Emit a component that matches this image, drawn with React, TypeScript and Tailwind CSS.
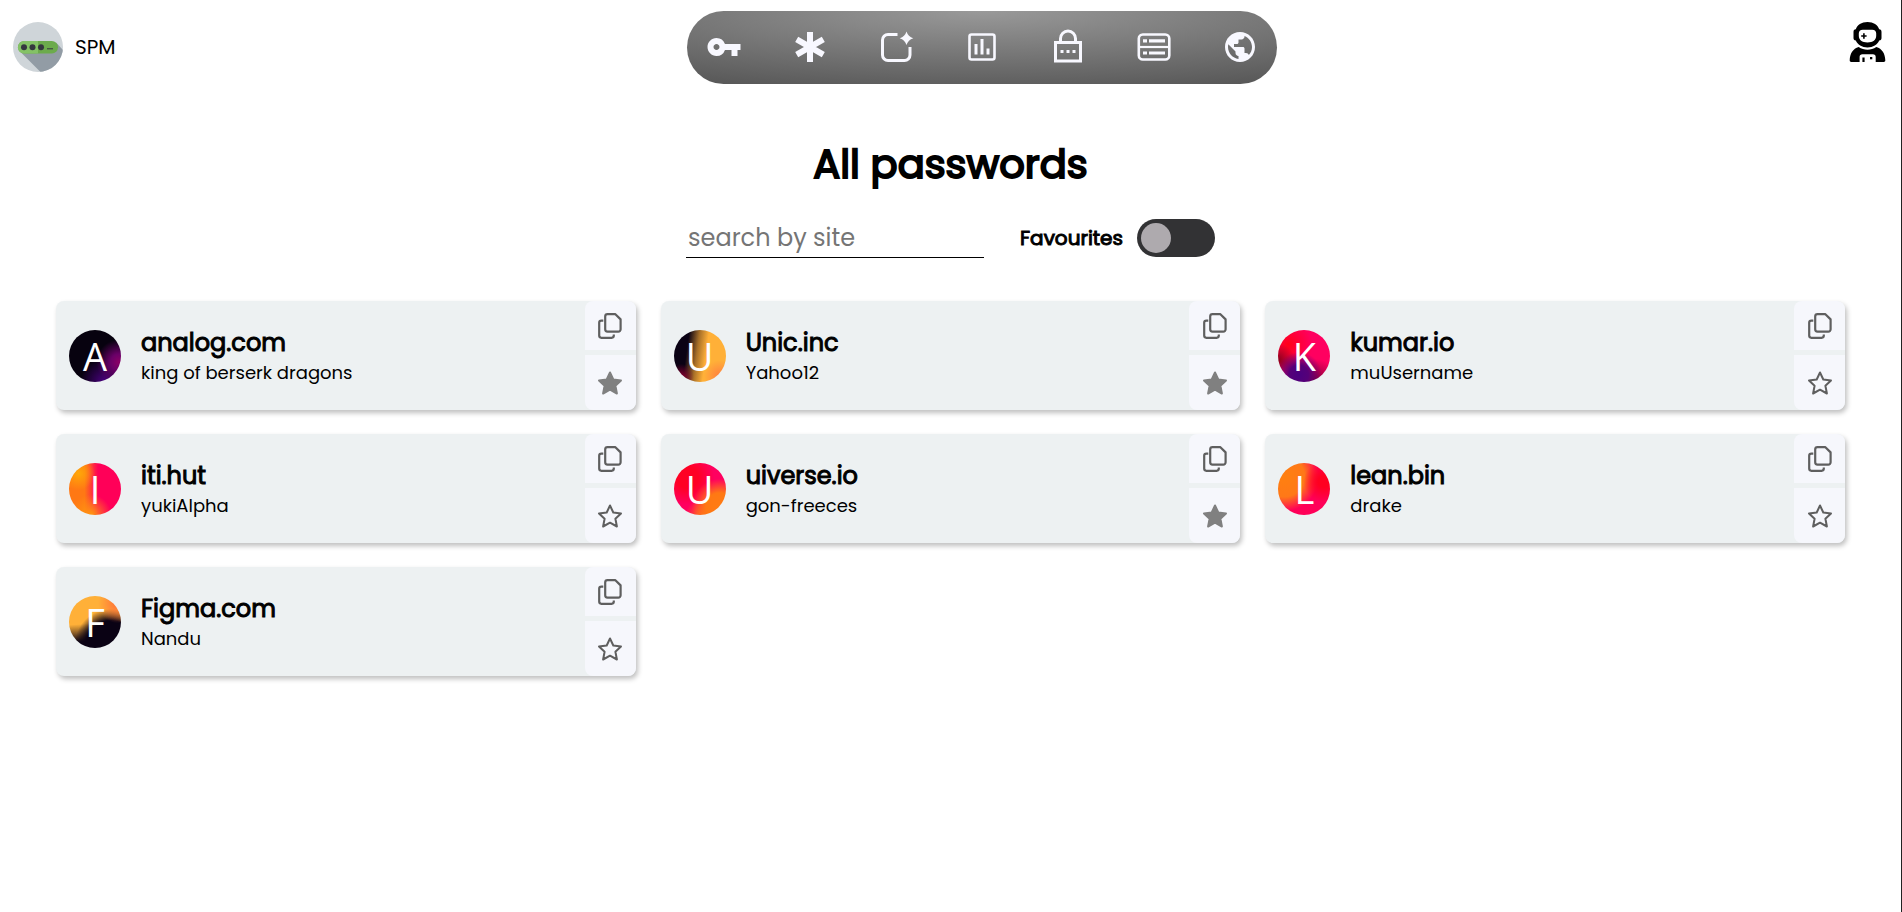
import { useState } from "react";
import type { ReactNode } from "react";
import { MdPublic, MdVpnKey } from "react-icons/md";

type Entry = { site: string; user: string; favourite: boolean; gradient: string };

const initialEntries: Entry[] = [
  { site: "analog.com", user: "king of berserk dragons", favourite: true, gradient: "bg-[radial-gradient(circle_at_96%_62%,#8b0066_0%,#6a0068_14%,transparent_38%),radial-gradient(circle_at_68%_100%,#4a0080_0%,transparent_38%),linear-gradient(#07020f,#07020f)]" },
  { site: "Unic.inc", user: "Yahoo12", favourite: true, gradient: "bg-[radial-gradient(circle_at_14%_90%,#8b0030_0%,transparent_20%),radial-gradient(circle_at_88%_88%,#ff8040_0%,transparent_24%),linear-gradient(98deg,#0a0214_26%,#a87028_44%,#ffb038_60%)]" },
  { site: "kumar.io", user: "muUsername", favourite: false, gradient: "bg-[radial-gradient(circle_at_40%_86%,#4a0080_0%,#560078_18%,transparent_42%),radial-gradient(circle_at_72%_100%,#780038_0%,transparent_36%),radial-gradient(circle_at_0%_58%,#880018_0%,transparent_28%),radial-gradient(circle_at_20%_28%,#ff0018_0%,#ff0060_44%)]" },
  { site: "iti.hut", user: "yukiAlpha", favourite: false, gradient: "bg-[radial-gradient(circle_at_18%_20%,#ffa808_0%,transparent_28%),radial-gradient(circle_at_42%_100%,#ff9810_0%,transparent_34%),linear-gradient(90deg,#ff7814_30%,#ff0058_56%)]" },
  { site: "uiverse.io", user: "gon-freeces", favourite: true, gradient: "bg-[radial-gradient(circle_at_88%_84%,#ff7c14_0%,#ff7814_22%,transparent_44%),radial-gradient(circle_at_56%_104%,#ff7814_0%,transparent_30%),radial-gradient(circle_at_26%_28%,#ff0024_20%,#ff0060_50%)]" },
  { site: "lean.bin", user: "drake", favourite: false, gradient: "bg-[radial-gradient(circle_at_88%_36%,#ff0020_10%,transparent_36%),radial-gradient(circle_at_12%_26%,#ff8010_0%,#ff7818_34%,#ff0058_58%)]" },
  { site: "Figma.com", user: "Nandu", favourite: false, gradient: "bg-[radial-gradient(circle_at_94%_14%,#ff7038_0%,transparent_30%),radial-gradient(circle_at_80%_94%,#0a0214_38%,transparent_56%),linear-gradient(176deg,#ffb038_52%,#0a0214_84%)]" },
];

function Logo() {
  return (
    <svg viewBox="0 0 50 50" className="size-[50px] shrink-0" aria-hidden="true">
      <defs>
        <clipPath id="logo-disc">
          <circle cx="25" cy="25" r="25" />
        </clipPath>
      </defs>
      <g clipPath="url(#logo-disc)">
        <rect width="50" height="50" fill="#cfd5d9" />
        <path d="M7 29.500 28 50.500h22V28l-6.500-7Z" fill="#929ca5" />
        <rect x="5" y="19" width="40" height="12.500" rx="6.200" fill="#6cab4c" />
        <path d="M11.200 19H25v12.500H11.200a6.200 6.200 0 0 1 0-12.500Z" fill="#84c266" />
        <circle cx="11" cy="25.200" r="3" fill="#35373f" />
        <circle cx="19.500" cy="25.200" r="3" fill="#35373f" />
        <circle cx="28" cy="25.200" r="3" fill="#35373f" />
        <rect x="34" y="26.300" width="6" height="1" fill="#35373f" />
      </g>
    </svg>
  );
}

function NavSvg({ children }: { children: ReactNode }) {
  return (
    <svg viewBox="0 0 36 36" className="size-9" fill="none" stroke="currentColor" strokeWidth="3" aria-hidden="true">
      {children}
    </svg>
  );
}

const navItems: { label: string; icon: ReactNode }[] = [
  { label: "Passwords", icon: <MdVpnKey className="size-9" /> },
  {
    label: "Generate",
    icon: (
      <NavSvg>
        <path d="M18 3v30M4.700 10.300l26.600 15.400M31.300 10.300 4.700 25.700" strokeWidth="6" />
      </NavSvg>
    ),
  },
  {
    label: "Add new",
    icon: (
      <NavSvg>
        <path d="M19.500 5.500H10a5.500 5.500 0 0 0-5.500 5.500v15a5.500 5.500 0 0 0 5.500 5.500h16.500A5.500 5.500 0 0 0 32 26v-8" />
        <path d="M28.500 2.500q1.600 5.200 6.800 6.800-5.200 1.600-6.800 6.800-1.600-5.200-6.800-6.800 5.200-1.600 6.800-6.800Z" fill="currentColor" stroke="none" />
      </NavSvg>
    ),
  },
  {
    label: "Statistics",
    icon: (
      <NavSvg>
        <rect x="5.500" y="5.500" width="25" height="25" rx="2" strokeWidth="2.600" />
        <path d="M12 15v10.500M18 10v15.500M24 19.500v6" />
      </NavSvg>
    ),
  },
  {
    label: "Lock",
    icon: (
      <NavSvg>
        <path d="M5.500 13.500h25v18.500h-25Z" />
        <path d="M10.500 13v-3.500a7.500 7.500 0 0 1 15 0V13" />
        <path d="M10.500 22.500h3M16.500 22.500h3M22.500 22.500h3" />
      </NavSvg>
    ),
  },
  {
    label: "Records",
    icon: (
      <NavSvg>
        <rect x="2.800" y="5.500" width="30.500" height="25" rx="4" strokeWidth="2.600" />
        <path d="M3 18h30" strokeWidth="2.200" />
        <path d="M7 11.800h4M13 11.800h16M7 24h4M13 24h16" strokeWidth="3.200" />
      </NavSvg>
    ),
  },
  { label: "Web", icon: <MdPublic className="size-9" /> },
];

function Astronaut() {
  return (
    <svg viewBox="0 0 38 42" className="h-[42px] w-[38px]" aria-hidden="true">
      <path
        fillRule="evenodd"
        d="M18.500 1c6 0 10.300 3 11.700 7.300 1.600.2 2.300 1 2.300 2.600v6c0 1.600-.7 2.400-2.300 2.600C28.500 23.500 24 26.500 18.500 26.500S8.500 23.500 6.800 19.500C5.200 19.300 4.500 18.500 4.500 16.900v-6c0-1.600.7-2.400 2.300-2.600C8.200 4 12.500 1 18.500 1Zm-4.700 7.800c-2.700 0-4 1.300-4 3.800v2.200c0 4.300 3.300 6.700 8.700 6.700s8.700-2.400 8.700-6.700v-2.200c0-2.500-1.300-3.800-4-3.800Z"
      />
      <path d="M14.900 12.300v5.400M12.200 15h5.400" stroke="#000" strokeWidth="1.600" />
      <path d="M9.700 26c5.300 3.600 12.300 3.600 17.600 0 5.700 1.600 8.900 6.700 9 13.300.1 1-.6 1.700-1.600 1.700h-8v-5c0-1.800-1-2.800-2.800-2.800H13.400c-1.800 0-2.800 1-2.800 2.800v5H2.300c-1 0-1.700-.7-1.600-1.700.1-6.600 3.300-11.700 9-13.300Z" />
      <path d="M14.500 36.500V41" stroke="#000" strokeWidth="2.200" />
      <rect x="21" y="36" width="2.300" height="2.300" />
    </svg>
  );
}

function CopyIcon() {
  return (
    <svg viewBox="0 0 24 26" className="h-[26px] w-6" fill="none" stroke="#5f5f5f" strokeWidth="2.200" strokeLinejoin="round" aria-hidden="true">
      <path d="M9.500 1.200h7.900l5.200 5.200v9.900a2.300 2.300 0 0 1-2.300 2.300H9.500a2.300 2.300 0 0 1-2.300-2.300V3.500a2.300 2.300 0 0 1 2.300-2.300Z" />
      <path d="M5.300 7.600H3.400A2.200 2.200 0 0 0 1.200 9.800v12.800a2.200 2.200 0 0 0 2.200 2.200h10.200a2.200 2.200 0 0 0 2.200-2.200v-1" />
    </svg>
  );
}

function StarIcon({ filled }: { filled: boolean }) {
  return (
    <svg viewBox="0 0 26 26" className="size-[26px]" fill={filled ? "#808080" : "none"} stroke={filled ? "#808080" : "#5f5f5f"} strokeWidth="2" strokeLinejoin="round" aria-hidden="true">
      <path d="m13 2.500 3.300 7 7.700.9-5.600 5.300 1.500 7.800L13 19.700l-6.900 3.800 1.500-7.800L2 10.400l7.700-.9Z" />
    </svg>
  );
}

function Card({ entry, onToggle }: { entry: Entry; onToggle: () => void }) {
  return (
    <li className="flex min-h-[109px] overflow-hidden rounded-lg bg-[#edf1f2] shadow-[2px_3px_5px_rgba(0,0,0,0.25)]">
      <div className="flex min-w-0 flex-1 items-center gap-5 pl-[13px]">
        <div className={`flex size-[52px] shrink-0 items-center justify-center rounded-full font-['Open_Sans',sans-serif] text-[38px] leading-none text-white ${entry.gradient}`}>
          {entry.site[0].toUpperCase()}
        </div>
        <div className="min-w-0 pt-0.5">
          <h2 className="truncate text-2xl leading-8 [-webkit-text-stroke:1px]">{entry.site}</h2>
          <p className="truncate text-lg leading-7">{entry.user}</p>
        </div>
      </div>
      <div className="flex w-[51px] flex-col gap-[5px]">
        <button type="button" aria-label={`Copy password for ${entry.site}`} className="flex h-[49px] items-center justify-center rounded-tl-lg bg-[#f6f7fc]">
          <CopyIcon />
        </button>
        <button type="button" aria-label={`Favourite ${entry.site}`} aria-pressed={entry.favourite} onClick={onToggle} className="flex flex-1 items-center justify-center rounded-bl-lg bg-[#f6f7fc]">
          <StarIcon filled={entry.favourite} />
        </button>
      </div>
    </li>
  );
}

export default function App() {
  const [entries, setEntries] = useState(initialEntries);
  const [query, setQuery] = useState("");
  const [onlyFavourites, setOnlyFavourites] = useState(false);
  const visible = entries.filter(
    (e) => e.site.toLowerCase().includes(query.toLowerCase()) && (!onlyFavourites || e.favourite),
  );
  const toggle = (site: string) =>
    setEntries(entries.map((e) => (e.site === site ? { ...e, favourite: !e.favourite } : e)));

  return (
    <div className="min-h-screen border-r border-[#222] bg-white font-['Poppins','Inter',sans-serif] text-black">
      <header className="flex items-center justify-between pt-[11px] pr-[14px] pl-[13px]">
        <a href="#" className="flex w-[102px] items-center gap-3 pb-0.5 text-xl">
          <Logo />
          SPM
        </a>
        <nav className="flex h-[73px] items-center gap-[50px] rounded-full bg-[radial-gradient(100%_118%_at_top,#999_0%,#555_100%)] px-[19px] pb-0.5 text-[#f8f8ff]">
          {navItems.map((item) => (
            <a key={item.label} href="#" aria-label={item.label}>
              {item.icon}
            </a>
          ))}
        </nav>
        <button type="button" aria-label="Profile" className="-mt-3">
          <Astronaut />
        </button>
      </header>

      <main className="px-14 pb-14">
        <h1 className="pt-14 text-center text-[40px] leading-[48px] [-webkit-text-stroke:2px]">All passwords</h1>
        <div className="mt-[30px] flex items-center justify-center gap-9">
          <input
            type="text"
            aria-label="search by site"
            placeholder="search by site"
            value={query}
            onChange={(e) => setQuery(e.target.value)}
            className="h-10 w-[298px] border-b border-black px-0.5 text-2xl outline-none placeholder:text-[#757575]"
          />
          <label className="flex cursor-pointer items-center gap-[14px] text-xl [-webkit-text-stroke:1px]">
            Favourites
            <input
              type="checkbox"
              role="switch"
              checked={onlyFavourites}
              onChange={(e) => setOnlyFavourites(e.target.checked)}
              className="flex h-[38px] w-[78px] cursor-pointer appearance-none items-center rounded-full bg-[#323234] px-1 before:size-[30px] before:rounded-full before:bg-[#aeaaae] before:content-[''] checked:justify-end"
            />
          </label>
        </div>
        <ul className="mt-[43px] grid grid-cols-1 gap-x-[25px] gap-y-6 md:grid-cols-2 xl:grid-cols-3">
          {visible.map((entry) => (
            <Card key={entry.site} entry={entry} onToggle={() => toggle(entry.site)} />
          ))}
        </ul>
      </main>
    </div>
  );
}
